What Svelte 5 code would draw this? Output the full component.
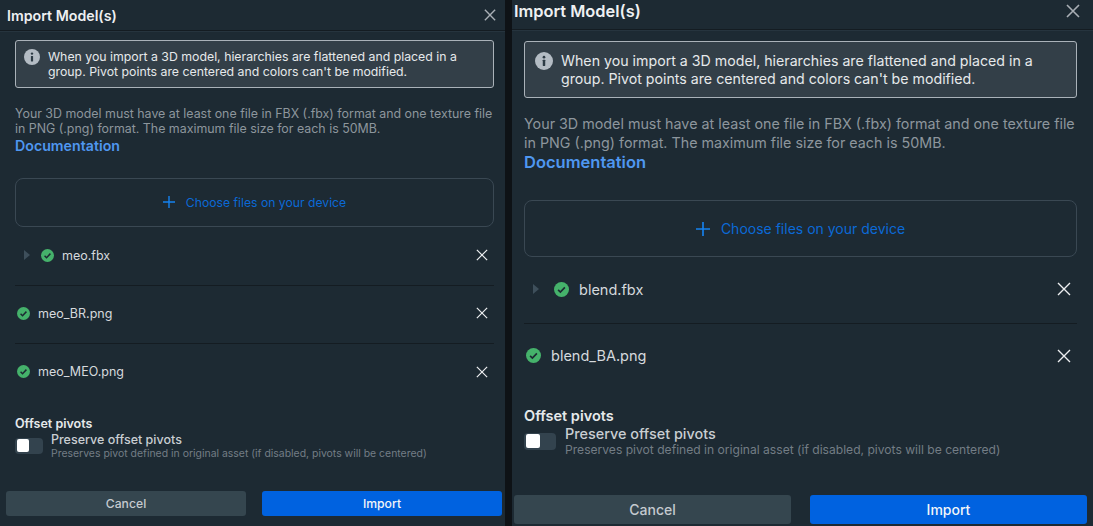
<script>
  const panels = [
    { cls: "left", files: [{ name: "meo.fbx", caret: true }, { name: "meo_BR.png" }, { name: "meo_MEO.png" }] },
    { cls: "right", files: [{ name: "blend.fbx", caret: true }, { name: "blend_BA.png" }] },
  ];
</script>

<div class="page">
  {#each panels as panel, p}
    {#if p > 0}<div class="gutter"></div>{/if}
    <section class="panel {panel.cls}">
      <header>
        <h1>Import Model(s)</h1>
        <button class="close" aria-label="Close">
          <svg viewBox="0 0 14 14"><path d="M1 1l12 12M13 1L1 13" /></svg>
        </button>
      </header>

      <div class="body">
        <div class="alert">
          <svg class="info" viewBox="0 0 16 16">
            <circle cx="8" cy="8" r="8" fill="#b4bcc4" />
            <circle cx="8" cy="4.6" r="1.2" fill="#2d3b45" />
            <rect x="6.9" y="6.9" width="2.2" height="5.6" rx="0.4" fill="#2d3b45" />
          </svg>
          <p>When you import a 3D model, hierarchies are flattened and placed in a group. Pivot points are centered and colors can't be modified.</p>
        </div>

        <p class="help">Your 3D model must have at least one file in FBX (.fbx) format and one texture file in PNG (.png) format. The maximum file size for each is 50MB.</p>
        <a class="docs" href="#docs">Documentation</a>

        <button class="drop">
          <svg class="plus" viewBox="0 0 12 12"><path d="M6 0v12M0 6h12" /></svg>
          Choose files on your device
        </button>

        <ul class="files">
          {#each panel.files as file}
            <li>
              {#if file.caret}
                <svg class="caret" viewBox="0 0 6 10"><path d="M0 0l6 5-6 5z" /></svg>
              {/if}
              <svg class="ok" viewBox="0 0 16 16">
                <circle cx="8" cy="8" r="8" fill="#45b26b" />
                <path d="M4.4 8.3l2.4 2.4 4.8-5" fill="none" stroke="#1d2a33" stroke-width="1.8" />
              </svg>
              <span class="name">{file.name}</span>
              <button class="remove" aria-label="Remove {file.name}">
                <svg viewBox="0 0 14 14"><path d="M1 1l12 12M13 1L1 13" /></svg>
              </button>
            </li>
          {/each}
        </ul>

        <h2>Offset pivots</h2>
        <div class="option">
          <span class="toggle"><span class="knob"></span></span>
          <div class="option-text">
            <div class="label">Preserve offset pivots</div>
            <div class="desc">Preserves pivot defined in original asset (if disabled, pivots will be centered)</div>
          </div>
        </div>
      </div>

      <footer>
        <button class="btn cancel">Cancel</button>
        <button class="btn import">Import</button>
      </footer>
    </section>
  {/each}
</div>

<style>
  :global(body) {
    margin: 0;
    background: #1d2a33;
  }

  .page {
    display: flex;
    width: 1093px;
    height: 526px;
    overflow: hidden;
    font-family: Inter, "Liberation Sans", sans-serif;
    color: #d5d9dd;
  }

  .gutter {
    width: 7px;
    background: #0e1216;
  }

  .panel {
    display: flex;
    flex-direction: column;
    box-sizing: border-box;
    background: #1d2a33;
  }

  .left {
    width: 505px;
    --head-h: 31px;
    --head-pb: 0px;
    --title: 14.2px;
    --head-pad: 7px;
    --close: 12px;
    --close-right: 9px;
    --pad: 15px;
    --pad-r: 11px;
    --alert-top: 9px;
    --alert-h: 48px;
    --alert-pt: 8px;
    --alert-pl: 8px;
    --alert-text: 12.3px;
    --alert-lh: 15px;
    --info: 16px;
    --help: 12.4px;
    --help-lh: 15.3px;
    --help-top: 18px;
    --docs: 14.2px;
    --drop-top: 24px;
    --drop-h: 49px;
    --drop-text: 12.2px;
    --row: 58px;
    --row-pb: 2px;
    --caret-r: 11px;
    --caret-l: 7px;
    --ok-r: 8px;
    --name: 12.5px;
    --ok: 13px;
    --x: 12px;
    --h2: 12.5px;
    --h2-top: 14px;
    --label: 12.5px;
    --desc: 10.45px;
    --option-gap: 8px;
    --toggle-w: 28px;
    --toggle-h: 16px;
    --knob: 12px;
    --btn-h: 25px;
    --btn-text: 12.2px;
    --foot-l: 6px;
    --foot-r: 3px;
    --foot-b: 10px;
    --foot-gap: 16px;
  }

  .right {
    flex: 1;
    --head-h: 30px;
    --head-pb: 7px;
    --title: 16.4px;
    --head-pad: 2px;
    --close: 14px;
    --close-right: 13px;
    --pad: 12px;
    --pad-r: 16px;
    --alert-top: 11px;
    --alert-h: 57px;
    --alert-pt: 10px;
    --alert-pl: 10px;
    --alert-text: 14.2px;
    --alert-lh: 18px;
    --info: 18px;
    --help: 14.3px;
    --help-lh: 19px;
    --help-top: 16px;
    --docs: 16.5px;
    --drop-top: 28px;
    --drop-h: 57px;
    --drop-text: 14px;
    --row: 66px;
    --row-pb: 3px;
    --caret-r: 15px;
    --caret-l: 7px;
    --ok-r: 10px;
    --name: 14.5px;
    --ok: 15px;
    --x: 14px;
    --h2: 14.5px;
    --h2-top: 17px;
    --label: 14.4px;
    --desc: 12.1px;
    --option-gap: 9px;
    --toggle-w: 32px;
    --toggle-h: 17px;
    --knob: 14px;
    --btn-h: 29px;
    --btn-text: 14px;
    --foot-l: 2px;
    --foot-r: 6px;
    --foot-b: 2px;
    --foot-gap: 19px;
  }

  header {
    display: flex;
    align-items: center;
    justify-content: space-between;
    box-sizing: border-box;
    height: var(--head-h);
    padding: 0 var(--close-right) var(--head-pb) var(--head-pad);
    border-bottom: 1px solid #141c22;
    box-shadow: 0 1px 0 #26343e;
  }

  h1 {
    margin: 0;
    font-size: var(--title);
    font-weight: 600;
    color: #eef0f2;
  }

  button {
    padding: 0;
    border: 0;
    background: none;
    font: inherit;
    color: inherit;
  }

  .close {
    display: flex;
    width: var(--close);
    height: var(--close);
  }

  .close path {
    fill: none;
    stroke: #a9afb5;
    stroke-width: 1.6;
  }

  .body {
    display: flex;
    flex-direction: column;
    flex: 1;
    padding: var(--alert-top) var(--pad-r) 0 var(--pad);
  }

  .alert {
    display: flex;
    gap: 8px;
    align-items: flex-start;
    box-sizing: border-box;
    height: var(--alert-h);
    padding: var(--alert-pt) 10px 0 var(--alert-pl);
    border: 1px solid #aab2b9;
    border-radius: 3px;
    background: #333f48;
  }

  .info {
    flex: none;
    width: var(--info);
    height: var(--info);
  }

  .alert p {
    margin: 0;
    font-size: var(--alert-text);
    line-height: var(--alert-lh);
    color: #e6e9eb;
  }

  .help {
    margin: var(--help-top) 0 0;
    font-size: var(--help);
    line-height: var(--help-lh);
    color: #8d969d;
  }

  .docs {
    font-size: var(--docs);
    font-weight: 600;
    color: #4f97f0;
    text-decoration: none;
  }

  .drop {
    display: flex;
    align-items: center;
    justify-content: center;
    gap: 11px;
    box-sizing: border-box;
    height: var(--drop-h);
    margin-top: var(--drop-top);
    border: 1px solid #3a4853;
    border-radius: 8px;
    font-size: var(--drop-text);
    color: #0b69d6;
  }

  .plus {
    width: var(--x);
    height: var(--x);
  }

  .plus path {
    fill: none;
    stroke: #1582f0;
    stroke-width: 1.4;
  }

  .files {
    margin: 1px 0 0;
    padding: 0;
    list-style: none;
  }

  .files li {
    display: flex;
    align-items: center;
    box-sizing: border-box;
    height: var(--row);
    padding: 0 6px var(--row-pb) 2px;
    border-bottom: 1px solid #141c22;
  }

  .files li:last-child {
    border-bottom: 0;
  }

  .caret {
    width: 6px;
    height: 10px;
    margin: 0 var(--caret-r) 0 var(--caret-l);
    fill: #3e4f5b;
  }

  .ok {
    flex: none;
    width: var(--ok);
    height: var(--ok);
    margin-right: var(--ok-r);
  }

  .name {
    flex: 1;
    font-size: var(--name);
    color: #d5d9dd;
  }

  .remove {
    display: flex;
    width: var(--x);
    height: var(--x);
  }

  .remove path {
    fill: none;
    stroke: #eceef0;
    stroke-width: 1.4;
  }

  h2 {
    margin: var(--h2-top) 0 0;
    font-size: var(--h2);
    font-weight: 600;
    color: #e6e9eb;
  }

  .option {
    display: flex;
    gap: var(--option-gap);
    align-items: center;
    margin-top: 1px;
  }

  .toggle {
    display: flex;
    align-items: center;
    flex: none;
    width: var(--toggle-w);
    height: var(--toggle-h);
    border-radius: 4px;
    background: #33434e;
  }

  .knob {
    width: var(--knob);
    height: calc(var(--toggle-h) - 3px);
    margin-left: 2px;
    border-radius: 2px;
    background: #fff;
  }

  .label {
    font-size: var(--label);
    font-weight: 500;
    color: #c9ced2;
  }

  .desc {
    font-size: var(--desc);
    color: #737d85;
  }

  footer {
    display: flex;
    gap: var(--foot-gap);
    padding: 0 var(--foot-r) var(--foot-b) var(--foot-l);
  }

  .btn {
    flex: 1;
    height: var(--btn-h);
    border-radius: 3px;
    font-size: var(--btn-text);
    font-weight: 500;
  }

  .cancel {
    background: #35464f;
    color: #c5cacf;
  }

  .import {
    background: #0062e0;
    color: #f2f5f8;
  }
</style>
